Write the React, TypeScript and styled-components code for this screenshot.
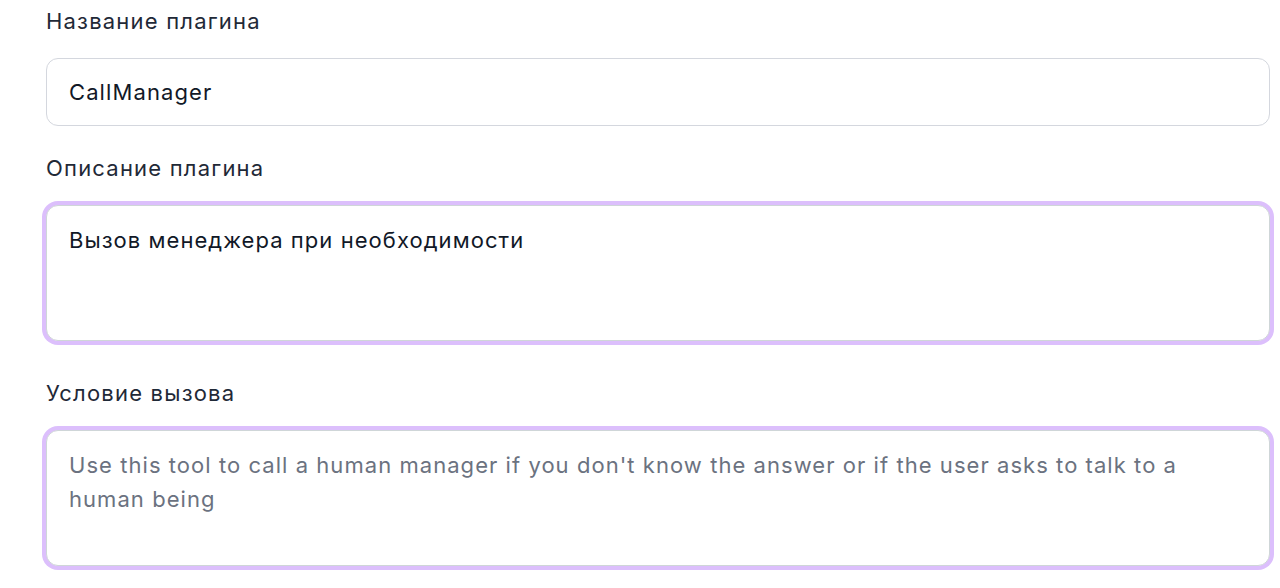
import React from "react";
import styled, { createGlobalStyle } from "styled-components";

const GlobalStyle = createGlobalStyle`
  html, body {
    margin: 0;
    padding: 0;
    background: #ffffff;
  }
  body {
    font-family: Inter, "Noto Sans", sans-serif;
  }
`;

const StyledForm = styled.div`
  display: flex;
  flex-direction: column;
  width: 1224px;
  padding: 6px 0 22px 46px;
`;

const StyledField = styled.div<{ $gapAfter: number }>`
  display: flex;
  flex-direction: column;
  margin-bottom: ${({ $gapAfter }) => $gapAfter}px;
`;

const StyledLabel = styled.label`
  font-size: 22px;
  line-height: 30px;
  letter-spacing: 1.2px;
  color: #1f2937;
  margin-bottom: 22px;
`;

const StyledInput = styled.input`
  box-sizing: border-box;
  width: 100%;
  height: 68px;
  padding: 0 22px;
  border: 1px solid #d4d7de;
  border-radius: 12px;
  font-family: inherit;
  font-size: 22px;
  letter-spacing: 1.1px;
  color: #111827;
  background: #ffffff;
  outline: none;
`;

const StyledTextarea = styled.textarea<{ $focused?: boolean }>`
  display: block;
  box-sizing: border-box;
  width: 100%;
  height: 136px;
  padding: 17px 60px 17px 22px;
  border: 1px solid #cfd6d8;
  border-radius: 12px;
  font-family: inherit;
  font-size: 22px;
  line-height: 34px;
  letter-spacing: 1.05px;
  color: #111827;
  resize: none;
  outline: none;
  box-shadow: ${({ $focused }) => ($focused ? "0 0 0 4px #dcbffc" : "none")};

  &::placeholder {
    color: #6b7280;
  }
`;

function App() {
  return (
    <>
      <GlobalStyle />
      <StyledForm>
        <StyledField $gapAfter={27}>
          <StyledLabel>Название плагина</StyledLabel>
          <StyledInput defaultValue="CallManager" />
        </StyledField>
        <StyledField $gapAfter={37}>
          <StyledLabel>Описание плагина</StyledLabel>
          <StyledTextarea $focused defaultValue="Вызов менеджера при необходимости" />
        </StyledField>
        <StyledField $gapAfter={0}>
          <StyledLabel>Условие вызова</StyledLabel>
          <StyledTextarea
            $focused
            placeholder="Use this tool to call a human manager if you don't know the answer or if the user asks to talk to a human being"
          />
        </StyledField>
      </StyledForm>
    </>
  );
}

export default App;
